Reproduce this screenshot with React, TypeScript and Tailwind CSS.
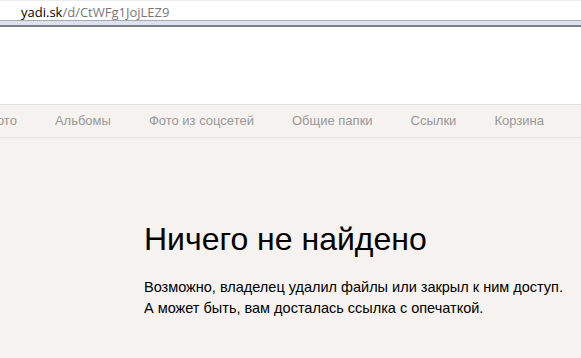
export default function App() {
  const nav = ["Фото", "Альбомы", "Фото из соцсетей", "Общие папки", "Ссылки", "Корзина"];
  return (
    <div className="w-[581px] h-[358px] overflow-hidden bg-[#f5f2ef] flex flex-col" style={{ fontFamily: '"Liberation Sans", Arial, sans-serif' }}>
      <div className="h-[20px] bg-white border-t border-[#ececec] flex items-center pl-[21px] pt-[3px] text-[13px] leading-none" style={{ fontFamily: '"Open Sans", "Liberation Sans", sans-serif' }}>
        <span className="text-black">yadi.sk</span>
        <span className="text-[#777]">/d/CtWFg1JojLEZ9</span>
      </div>
      <div className="h-[7px] bg-[#dfe2ee] border-t border-[#a8aab2] border-b-2 border-b-[#7c7e85]" />
      <div className="h-[77px] bg-white" />
      <div className="h-[34px] border-t border-[#e3e0dc] border-b border-b-[#e9e6e2] flex items-center text-[13px] text-[#999] overflow-hidden">
        <div className="flex items-center gap-[38px] ml-[-13px] whitespace-nowrap">
          {nav.map((n) => (
            <span key={n}>{n}</span>
          ))}
          <span className="text-black">.</span>
        </div>
      </div>
      <div className="pl-[144px] pt-[85px]">
        <h1 className="text-[32px] leading-none text-black">Ничего не найдено</h1>
        <p className="mt-[22px] text-[14.5px] leading-[21px] text-black">
          Возможно, владелец удалил файлы или закрыл к ним доступ.
          <br />
          А может быть, вам досталась ссылка с опечаткой.
        </p>
      </div>
    </div>
  );
}
